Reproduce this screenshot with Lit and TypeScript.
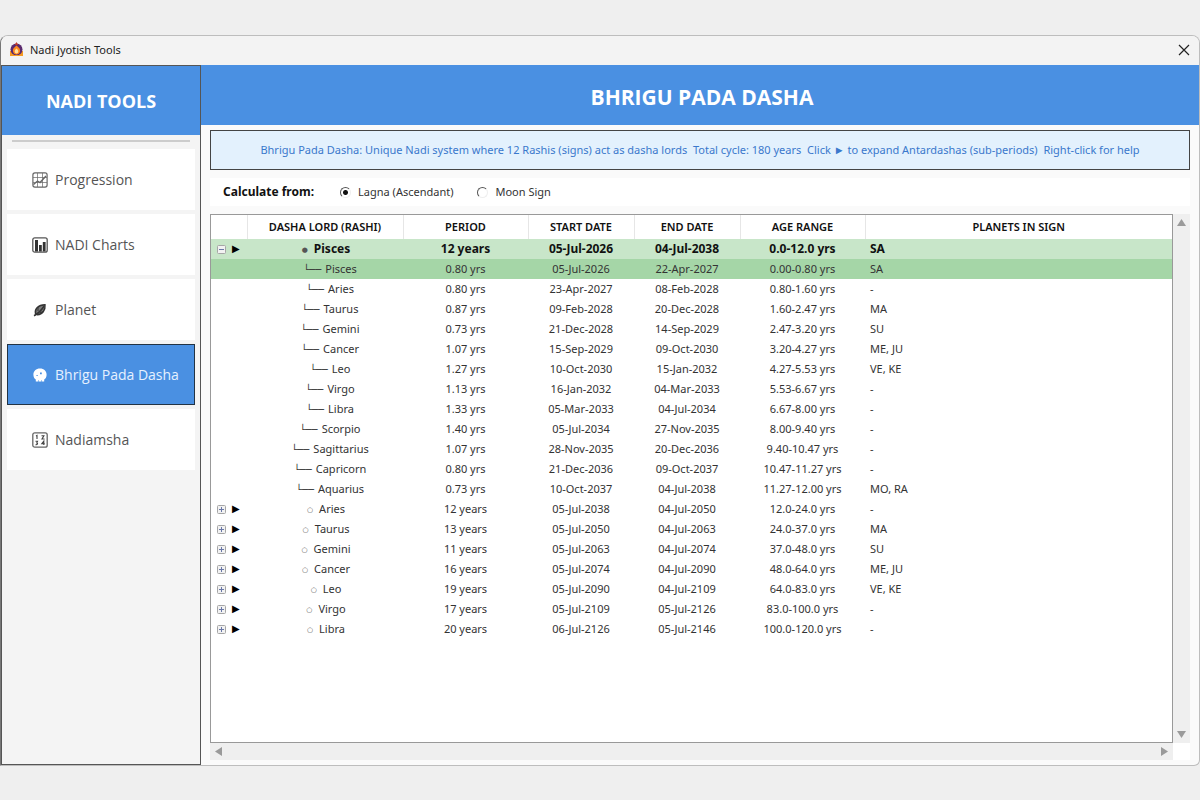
import { LitElement, html, svg, css, nothing } from "lit";
import { customElement, state } from "lit/decorators.js";
import { classMap } from "lit/directives/class-map.js";

type Cells = [string, string, string, string, string, string];
interface Dasha {
  id: string;
  cells: Cells;
  current?: boolean;
  subs: Cells[];
}

const DASHAS: Dasha[] = [
  {
    id: "pisces",
    current: true,
    cells: ["Pisces", "12 years", "05-Jul-2026", "04-Jul-2038", "0.0-12.0 yrs", "SA"],
    subs: [
      ["Pisces", "0.80 yrs", "05-Jul-2026", "22-Apr-2027", "0.00-0.80 yrs", "SA"],
      ["Aries", "0.80 yrs", "23-Apr-2027", "08-Feb-2028", "0.80-1.60 yrs", "-"],
      ["Taurus", "0.87 yrs", "09-Feb-2028", "20-Dec-2028", "1.60-2.47 yrs", "MA"],
      ["Gemini", "0.73 yrs", "21-Dec-2028", "14-Sep-2029", "2.47-3.20 yrs", "SU"],
      ["Cancer", "1.07 yrs", "15-Sep-2029", "09-Oct-2030", "3.20-4.27 yrs", "ME, JU"],
      ["Leo", "1.27 yrs", "10-Oct-2030", "15-Jan-2032", "4.27-5.53 yrs", "VE, KE"],
      ["Virgo", "1.13 yrs", "16-Jan-2032", "04-Mar-2033", "5.53-6.67 yrs", "-"],
      ["Libra", "1.33 yrs", "05-Mar-2033", "04-Jul-2034", "6.67-8.00 yrs", "-"],
      ["Scorpio", "1.40 yrs", "05-Jul-2034", "27-Nov-2035", "8.00-9.40 yrs", "-"],
      ["Sagittarius", "1.07 yrs", "28-Nov-2035", "20-Dec-2036", "9.40-10.47 yrs", "-"],
      ["Capricorn", "0.80 yrs", "21-Dec-2036", "09-Oct-2037", "10.47-11.27 yrs", "-"],
      ["Aquarius", "0.73 yrs", "10-Oct-2037", "04-Jul-2038", "11.27-12.00 yrs", "MO, RA"],
    ],
  },
  { id: "aries", cells: ["Aries", "12 years", "05-Jul-2038", "04-Jul-2050", "12.0-24.0 yrs", "-"], subs: [] },
  { id: "taurus", cells: ["Taurus", "13 years", "05-Jul-2050", "04-Jul-2063", "24.0-37.0 yrs", "MA"], subs: [] },
  { id: "gemini", cells: ["Gemini", "11 years", "05-Jul-2063", "04-Jul-2074", "37.0-48.0 yrs", "SU"], subs: [] },
  { id: "cancer", cells: ["Cancer", "16 years", "05-Jul-2074", "04-Jul-2090", "48.0-64.0 yrs", "ME, JU"], subs: [] },
  { id: "leo", cells: ["Leo", "19 years", "05-Jul-2090", "04-Jul-2109", "64.0-83.0 yrs", "VE, KE"], subs: [] },
  { id: "virgo", cells: ["Virgo", "17 years", "05-Jul-2109", "05-Jul-2126", "83.0-100.0 yrs", "-"], subs: [] },
  { id: "libra", cells: ["Libra", "20 years", "06-Jul-2126", "05-Jul-2146", "100.0-120.0 yrs", "-"], subs: [] },
];

const HEADINGS = ["DASHA LORD (RASHI)", "PERIOD", "START DATE", "END DATE", "AGE RANGE", "PLANETS IN SIGN"];

const ICONS = {
  progression: svg`<g fill="none" stroke="#666" stroke-width="1.2"><rect x=".9" y=".9" width="14.2" height="14.2" rx="2"/><path stroke-width=".7" d="M1 5.5h14M1 10.5h14M5.5 1v14M10.5 1v14"/><path stroke-width="1.4" d="M1.5 12.5l4-3.5 2.5 1.5 6-6.5"/></g>`,
  charts: svg`<rect x=".8" y=".8" width="14.4" height="14.4" rx="2" fill="#fff" stroke="#555" stroke-width="1.3"/><path fill="#333" d="M3 3h3v11.5H3zM7 8h2.8v6.5H7zM10.8 5h2.8v9.5h-2.8z"/>`,
  planet: svg`<path fill="#7c7c7c" stroke="#333" stroke-width="1.4" d="M3.5 11.5C2.5 7 6 3 13 2.8c.6 5-2.500 9.600-7.500 10z"/><path fill="none" stroke="#333" stroke-width="1.6" d="M2 13.800c4-2 7-5 10-9.500"/><path fill="none" stroke="#333" d="M6 9V5M8 10.500l4-1"/>`,
  bhrigu: svg`<path fill="#fff" d="M8 1.500c4 0 6.600 2.700 6.600 6.200 0 2.300-1 3.800-2.400 4.700v2.100H3.800v-2.100C2.400 11.500 1.400 10 1.400 7.700 1.400 4.200 4 1.500 8 1.500z"/><path fill="#4a90e2" d="M8 5.500h1.800v1.800H8zM4.500 8h1.200v1H4.500zM6 13.500h1v1H6zM9 13.500h1v1H9z"/>`,
  nadiamsha: svg`<rect x=".8" y=".8" width="14.4" height="14.4" rx="2" fill="none" stroke="#666" stroke-width="1.3"/><path fill="none" stroke="#444" stroke-width="1.1" d="M4 4l1-.6V7M9.500 3.800h2.400L10 7h2.500M3.500 9.300h2L4.800 11c1.400 0 .8 2-1.300 1.700M11.800 13V9.200l-2 2.600h3"/>`,
};

const NAV: { id: keyof typeof ICONS; label: string }[] = [
  { id: "progression", label: "Progression" },
  { id: "charts", label: "NADI Charts" },
  { id: "planet", label: "Planet" },
  { id: "bhrigu", label: "Bhrigu Pada Dasha" },
  { id: "nadiamsha", label: "Nadiamsha" },
];

@customElement("app-root")
export class AppRoot extends LitElement {
  @state() private page = "bhrigu";
  @state() private open = new Set(["pisces"]);

  static styles = css`
    :host {
      display: flex;
      box-sizing: border-box;
      min-height: 100vh;
      padding: 35px 0 34px;
      background: #efefef;
      color: #333;
      font: 11px/20px "Noto Sans", "Open Sans", sans-serif;
    }
    * { box-sizing: border-box; }
    button { font: inherit; color: inherit; margin: 0; padding: 0; border: 0; background: none; }
    .window {
      flex: 1;
      display: flex;
      flex-direction: column;
      border: 1px solid #bdbdbd;
      border-left-color: #777;
      border-radius: 8px 8px 6px 0;
      overflow: hidden;
      background: #fafafa;
    }
    .titlebar {
      display: flex;
      align-items: center;
      gap: 6px;
      height: 29px;
      padding: 0 9px 2px 8px;
      background: #f3f3f3;
      color: #222;
    }
    .titlebar .name { flex: 1; }
    .titlebar svg { display: block; }
    .body { flex: 1; display: flex; }
    .sidebar {
      display: flex;
      flex-direction: column;
      width: 200px;
      border: 1px solid #555;
      background: #f4f4f4;
      font-family: "Open Sans", "Noto Sans", sans-serif;
    }
    .brand {
      height: 69px;
      line-height: 71px;
      text-align: center;
      background: #4a90e2;
      color: #fff;
      font-size: 18px;
      font-weight: 700;
    }
    .rule { height: 2px; margin: 5px 10px 7px; background: #ccc; }
    .nav { display: flex; flex-direction: column; gap: 4px; padding: 0 5px; }
    .item {
      display: flex;
      align-items: center;
      gap: 7px;
      height: 61px;
      padding: 0 24px;
      border: 1px solid #fff;
      background: #fff;
      color: #555;
      font-size: 14px;
      white-space: nowrap;
    }
    .item.on { background: #4a90e2; border-color: #234; color: #e6f1ff; }
    .item svg { flex: none; }
    .main { flex: 1; min-width: 0; display: flex; flex-direction: column; }
    .heading {
      margin: 0;
      height: 60px;
      padding-left: 4px;
      line-height: 64px;
      background: #4a90e2;
      color: #fff;
      text-align: center;
      font-family: "Open Sans", "Noto Sans", sans-serif;
      font-size: 21px;
      font-weight: 700;
    }
    .content { flex: 1; display: flex; flex-direction: column; padding: 5px 9px 5px; }
    .info {
      height: 40px;
      line-height: 38px;
      border: 1px solid #444;
      background: #e3f1fd;
      color: #3a78cc;
      text-align: center;
      white-space: pre;
    }
    .source {
      display: flex;
      align-items: center;
      height: 28px;
      margin: 8px 0;
      padding: 0 13px;
      border: 0;
      background: #fff;
    }
    .source b { color: #111; font-size: 12px; margin-right: 26px; }
    .source label { display: flex; align-items: center; gap: 7px; margin-right: 24px; }
    .source input {
      appearance: none;
      width: 11px;
      height: 11px;
      margin: 0;
      border: 1px solid #eee;
      border-top-color: #555;
      border-left-color: #555;
      border-radius: 50%;
      background: #fff;
    }
    .source input:checked { background: radial-gradient(circle, #111 2px, #fff 3px); }
    .grid { flex: 1; display: grid; grid-template: 1fr 17px / 1fr 17px; }
    .view { border: 1px solid #999; background: #fff; overflow: hidden; }
    .corner { background: #fff; }
    .bar { display: flex; justify-content: space-between; align-items: center; padding: 4px; background: #efefef; }
    .bar.down { flex-direction: column; }
    .bar svg { display: block; fill: #9a9a9a; }
    table { width: 100%; table-layout: fixed; border-collapse: collapse; }
    .c0 { width: 36px; } .c1 { width: 156px; } .c2, .c5 { width: 125px; } .c3, .c4 { width: 106px; }
    th, td { padding: 0; text-align: center; white-space: nowrap; }
    th { height: 24px; color: #111; font-weight: 600; }
    th + th { border-left: 1px solid #e6e6e6; }
    td { height: 20px; line-height: 20px; }
    td.lord { padding-left: 2px; }
    td:last-child { text-align: left; padding-left: 5px; }
    .current { background: #c8e6c9; color: #111; font-weight: 700; font-size: 12px; }
    .active { background: #a5d6a7; }
    .twist { display: flex; align-items: center; gap: 6px; padding-left: 6px; }
    .toggle { display: flex; }
    .arrow { font: 10px/20px "DejaVu Sans", sans-serif; color: #000; }
    .bullet { font: 7px/1 "DejaVu Sans", sans-serif; color: #555; margin-right: 6px; vertical-align: 1px; }
    .branch { font: 10px/1 "DejaVu Sans Mono", monospace; margin: 0 4px 0 8px; }
  `;

  private toggle(id: string) {
    const next = new Set(this.open);
    next.has(id) ? next.delete(id) : next.add(id);
    this.open = next;
  }

  private renderDasha(d: Dasha) {
    const open = this.open.has(d.id);
    const [lord, ...rest] = d.cells;
    return html`
      <tr class=${classMap({ current: !!d.current })}>
        <td>
          <div class="twist">
            <button class="toggle" aria-label=${(open ? "Collapse " : "Expand ") + lord} @click=${() => this.toggle(d.id)}>
              <svg width="9" height="9" fill="none">
                <rect x=".5" y=".5" width="8" height="8" rx="1" fill="#f2f2f2" stroke="#a6a6a6" />
                <path stroke="#6a78a8" d=${open ? "M2 4.500h5" : "M2 4.500h5M4.500 2v5"} />
              </svg>
            </button>
            <span class="arrow">▶</span>
          </div>
        </td>
        <td class="lord"><span class="bullet">${d.current ? "●" : "○"}</span>${lord}</td>
        ${rest.map((c) => html`<td>${c}</td>`)}
      </tr>
      ${open
        ? d.subs.map(
            ([name, ...cells], i) => html`<tr class=${classMap({ active: !!d.current && i === 0 })}>
              <td></td>
              <td class="lord"><span class="branch">└──</span>${name}</td>
              ${cells.map((c) => html`<td>${c}</td>`)}
            </tr>`
          )
        : nothing}
    `;
  }

  render() {
    return html`
      <div class="window">
        <header class="titlebar">
          <svg width="15" height="15" viewBox="0 0 15 15">
            <path fill="#f59a23" d="M1 9h13v4.500H1z" />
            <circle cx="7.500" cy="7.500" r="6" fill="#5b2a6e" />
            <path fill="#c0392b" d="M7.500 0l1.800 3H5.700z" />
            <path fill="#ff8a1e" d="M7.500 3.500c3 2.500 4 3.800 3.500 6-.4 2-1.800 3-3.500 3s-3.100-1-3.500-3c-.5-2.200.5-3.500 3.500-6z" />
            <path fill="#ffe0a0" d="M7.500 6.500c1.700 1.700 2 2.300 1.700 3.500-.2 1-1 1.400-1.700 1.400s-1.500-.4-1.700-1.400c-.3-1.200 0-1.800 1.700-3.500z" />
            <path fill="#f59a23" d="M1 11.500c2 2 11 2 13 0v2.500H1z" />
          </svg>
          <span class="name">Nadi Jyotish Tools</span>
          <button aria-label="Close">
            <svg width="12" height="12"><path stroke="#222" stroke-width="1.200" d="M1 1l10 10M11 1L1 11" /></svg>
          </button>
        </header>
        <div class="body">
          <aside class="sidebar">
            <div class="brand">NADI TOOLS</div>
            <div class="rule"></div>
            <nav class="nav">
              ${NAV.map(
                (n) => html`<button class=${classMap({ item: true, on: this.page === n.id })} @click=${() => (this.page = n.id)}>
                  <svg width="16" height="16" viewBox="0 0 16 16">${ICONS[n.id]}</svg>
                  <span>${n.label}</span>
                </button>`
              )}
            </nav>
          </aside>
          <main class="main">
            <h1 class="heading">BHRIGU PADA DASHA</h1>
            <div class="content">
              <div class="info">Bhrigu Pada Dasha: Unique Nadi system where 12 Rashis (signs) act as dasha lords  Total cycle: 180 years  Click ► to expand Antardashas (sub-periods)  Right-click for help</div>
              <div class="source" role="radiogroup" aria-labelledby="from">
                <b id="from">Calculate from:</b>
                <label><input type="radio" name="from" checked />Lagna (Ascendant)</label>
                <label><input type="radio" name="from" />Moon Sign</label>
              </div>
              <div class="grid">
                <div class="view">
                  <table>
                    <colgroup>
                      <col class="c0" /><col class="c1" /><col class="c2" /><col class="c3" /><col class="c4" /><col class="c5" /><col />
                    </colgroup>
                    <thead>
                      <tr><th></th>${HEADINGS.map((h) => html`<th>${h}</th>`)}</tr>
                    </thead>
                    <tbody>${DASHAS.map((d) => this.renderDasha(d))}</tbody>
                  </table>
                </div>
                <div class="bar down">
                  <button aria-label="Scroll up"><svg width="9" height="8"><path d="M0 8L4.500 1 9 8z" /></svg></button>
                  <button aria-label="Scroll down"><svg width="9" height="8"><path d="M0 0L4.500 7 9 0z" /></svg></button>
                </div>
                <div class="bar">
                  <button aria-label="Scroll left"><svg width="8" height="9"><path d="M8 0L1 4.500 8 9z" /></svg></button>
                  <button aria-label="Scroll right"><svg width="8" height="9"><path d="M0 0L7 4.500 0 9z" /></svg></button>
                </div>
                <div class="corner"></div>
              </div>
            </div>
          </main>
        </div>
      </div>
    `;
  }
}
